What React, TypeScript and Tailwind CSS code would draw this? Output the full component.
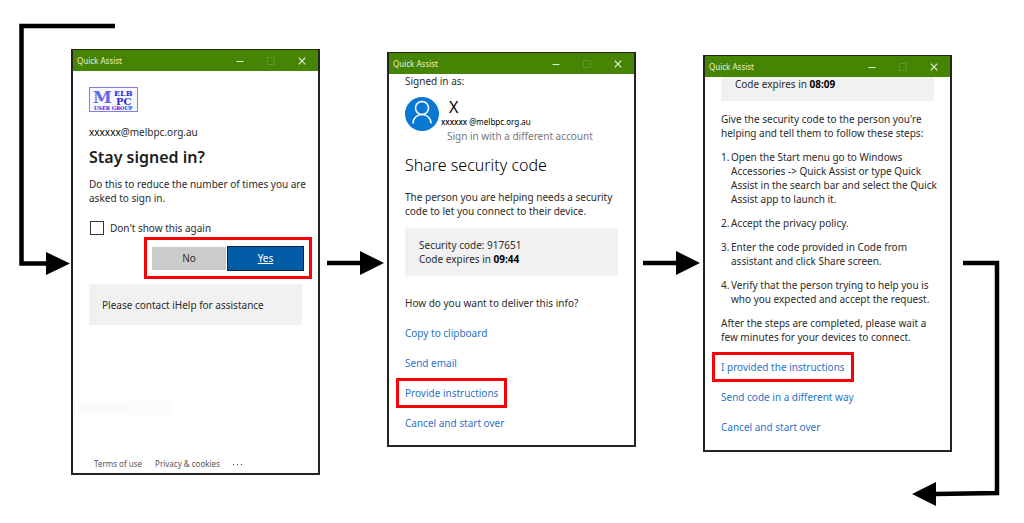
import type { ReactNode } from 'react';
import clsx from 'clsx';

/* ------------------------------------------------------------
 *  Quick Assist walkthrough: three windows joined by arrows.
 * ------------------------------------------------------------ */

const STEPS: string[][] = [
  [
    'Open the Start menu go to Windows',
    'Accessories -> Quick Assist or type Quick',
    'Assist in the search bar and select the Quick',
    'Assist app to launch it.',
  ],
  ['Accept the privacy policy.'],
  ['Enter the code provided in Code from', 'assistant and click Share screen.'],
  ['Verify that the person trying to help you is', 'who you expected and accept the request.'],
];

function Lines({ lines }: { lines: string[] }) {
  return (
    <>
      {lines.map((line) => (
        <span key={line} className="block whitespace-nowrap">{line}</span>
      ))}
    </>
  );
}

function AppWindow({ className, children }: { className?: string; children: ReactNode }) {
  return (
    <section className={clsx('flex flex-col border-2 border-t border-[#23261f] bg-white', className)}>
      <header className="flex h-[21px] shrink-0 items-center justify-between bg-[#468404] pl-1 text-[8px] text-[#e6f0dc]">
        <span>Quick Assist</span>
        <div className="flex items-center gap-[7px] pr-1">
          <button type="button" aria-label="Minimise" className="flex w-6 justify-center">
            <svg width="8" height="8" viewBox="0 0 8 8" stroke="currentColor"><path d="M0.5 4.5h7" /></svg>
          </button>
          <button type="button" aria-label="Maximise" disabled className="flex w-6 justify-center text-[#5f9428]">
            <svg width="8" height="8" viewBox="0 0 8 8" fill="none" stroke="currentColor"><path d="M0.5 0.5h7v7h-7z" /></svg>
          </button>
          <button type="button" aria-label="Close" className="flex w-6 justify-center">
            <svg width="8" height="8" viewBox="0 0 8 8" stroke="currentColor" strokeWidth="1.2"><path d="M0.7 0.7l6.6 6.6M7.3 0.7l-6.6 6.6" /></svg>
          </button>
        </div>
      </header>
      {children}
    </section>
  );
}

function ActionLink({ marked, children }: { marked?: boolean; children: ReactNode }) {
  return (
    <a
      href="#"
      className={clsx(
        'flex h-[30px] items-center self-start text-[#2b72c8]',
        marked && '-ml-[9px] border-[3px] border-[#fb0007] px-[6px]',
      )}
    >
      {children}
    </a>
  );
}

function Logo() {
  return (
    <svg width="49" height="26" viewBox="0 0 49 26" className="block" fontFamily="'DejaVu Serif', serif" fontWeight="bold" fill="#2f2ad6" role="img" aria-label="Melb PC User Group">
      <rect x="0.5" y="0.5" width="48" height="24" fill="#f8f8ff" stroke="#7d7df0" />
      <text x="4" y="16" fontSize="17" fill="#6663e4">M</text>
      <text x="25" y="9" fontSize="8">ELB</text>
      <text x="27" y="18" fontSize="10">PC</text>
      <text x="5" y="23" fontSize="5">USER GROUP</text>
    </svg>
  );
}

function Avatar() {
  return (
    <svg width="34" height="34" viewBox="0 0 34 34" fill="none" stroke="#fff" strokeWidth="1.5" className="shrink-0">
      <circle cx="17" cy="17" r="17" fill="#0878d3" stroke="none" />
      <circle cx="17" cy="11" r="6.5" />
      <path d="M8 26.5c0-5.2 4-9 9-9s9 3.800 9 9" />
    </svg>
  );
}

// Arrow from one window to the next
function Arrow() {
  return (
    <svg width="58" height="24" viewBox="0 0 58 24" className="mr-[3px] mt-[251px] justify-self-end">
      <path d="M1 12h34" stroke="#000" strokeWidth="4.500" />
      <path d="M34 0l24 12-24 12z" />
    </svg>
  );
}

function StaySignedIn() {
  return (
    <AppWindow className="mt-[49px]">
      <div className="flex flex-col px-4 pb-[2px] pt-4">
        <Logo />
        <p className="mt-3"><span className="text-black">xxxxxx</span>@melbpc.org.au</p>
        <h1 className="mt-2 text-[16px] font-semibold leading-5 text-[#1c1c1c]">Stay signed in?</h1>
        <p className="mt-[10px]"><Lines lines={['Do this to reduce the number of times you are', 'asked to sign in.']} /></p>
        <label className="mt-4 flex items-center gap-[6px]">
          <input type="checkbox" className="m-0 ml-px size-[14px] appearance-none border border-[#333] bg-white" />
          Don't show this again
        </label>
        <div className="-mr-[10px] mt-[2px] flex h-[42px] items-center gap-px self-end border-[3px] border-[#fb0007] px-[5px]">
          <button type="button" className="h-[23px] w-[74px] bg-[#cbcbcb]">No</button>
          <button type="button" className="h-[25px] w-[77px] border border-[#14202e] bg-[#035ca6] text-white underline">Yes</button>
        </div>
        <div className="mt-[5px] flex h-[41px] items-center bg-[#f1f1f1] px-[13px]">Please contact iHelp for assistance</div>
        <div className="-ml-4 mt-[76px] w-[100px] bg-[#fbfcfe] pl-2 text-[8px] text-[#f3f5f8]">Window Snip</div>
        <footer className="mt-[42px] flex gap-[13px] pl-[5px] text-[8px] text-[#555]">
          <a href="#">Terms of use</a>
          <a href="#">Privacy &amp; cookies</a>
          <button type="button" aria-label="More" className="flex items-center gap-[3px]">
            <i className="size-px bg-[#444]" />
            <i className="size-px bg-[#444]" />
            <i className="size-px bg-[#444]" />
          </button>
        </footer>
      </div>
    </AppWindow>
  );
}

function ShareCode() {
  return (
    <AppWindow className="mt-[52px]">
      <div className="flex flex-col px-4 pb-[7px]">
        <p>Signed in as:</p>
        <div className="mt-[9px] flex gap-[2px]">
          <Avatar />
          <div className="text-black">
            <p className="pl-2 text-[16px] leading-5">X</p>
            <p className="text-[8px] leading-[10px]"><b className="font-medium">xxxxxx</b> @melbpc.org.au</p>
            <a href="#" className="block whitespace-nowrap pl-[6px] leading-[18px] text-[#777]">Sign in with a different account</a>
          </div>
        </div>
        <h1 className="mt-2 whitespace-nowrap text-[16px] font-light leading-6 text-black">Share security code</h1>
        <p className="mt-[13px]"><Lines lines={['The person you are helping needs a security', 'code to let you connect to their device.']} /></p>
        <div className="mt-[10px] bg-[#f1f1f1] px-[14px] py-[10px]">
          <p>Security code: 917651</p>
          <p>Code expires in <b className="text-black">09:44</b></p>
        </div>
        <p className="mb-2 mt-5">How do you want to deliver this info?</p>
        <ActionLink>Copy to clipboard</ActionLink>
        <ActionLink>Send email</ActionLink>
        <ActionLink marked>Provide instructions</ActionLink>
        <ActionLink>Cancel and start over</ActionLink>
      </div>
    </AppWindow>
  );
}

function Instructions() {
  return (
    <AppWindow className="mt-[55px]">
      <div className="flex flex-col px-4 pb-2">
        <div className="bg-[#f1f1f1] px-[14px] pb-[10px]">Code expires in <b className="text-black">08:09</b></div>
        <p className="mt-[11px]"><Lines lines={["Give the security code to the person you're", 'helping and tell them to follow these steps:']} /></p>
        <ol className="mt-[10px] flex list-none flex-col gap-[10px]">
          {STEPS.map((lines, i) => (
            <li key={i} className="flex">
              <span className="w-[10px] shrink-0">{i + 1}.</span>
              <span><Lines lines={lines} /></span>
            </li>
          ))}
        </ol>
        <p className="mb-2 mt-[10px]"><Lines lines={['After the steps are completed, please wait a', 'few minutes for your devices to connect.']} /></p>
        <ActionLink marked>I provided the instructions</ActionLink>
        <ActionLink>Send code in a different way</ActionLink>
        <ActionLink>Cancel and start over</ActionLink>
      </div>
    </AppWindow>
  );
}

export default function App() {
  return (
    <main className="grid min-h-screen grid-cols-[71fr_minmax(0,249fr)_67fr_minmax(0,249fr)_67fr_minmax(0,249fr)_72fr] items-start overflow-hidden bg-white font-['Noto_Sans','Open_Sans',sans-serif] text-[10px] leading-[14px] text-[#2b2b2b]">
      {/* incoming path, its top arm runs over the first window */}
      <svg width="52" height="276" viewBox="0 0 52 276" className="justify-self-end overflow-visible">
        <path d="M96 26H2.500V263.500H28" fill="none" stroke="#000" strokeWidth="4.500" />
        <path d="M27 252l24 11.500-24 11.500z" />
      </svg>
      <StaySignedIn />
      <Arrow />
      <ShareCode />
      <Arrow />
      <Instructions />
      {/* outgoing path, turns back under the last window */}
      <svg width="62" height="250" viewBox="0 0 62 250" className="mt-[256px] overflow-visible">
        <path d="M11 7H45V237L-17 238" fill="none" stroke="#000" strokeWidth="4.500" />
        <path d="M-16 226v24l-24-12z" />
      </svg>
    </main>
  );
}
